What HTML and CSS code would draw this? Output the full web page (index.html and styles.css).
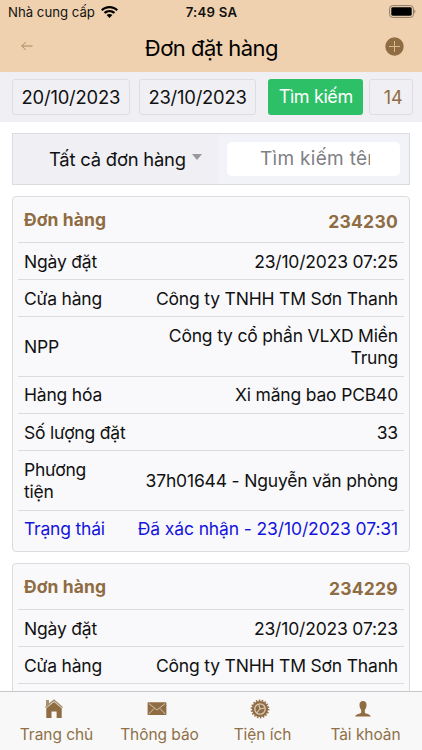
FILE: index.html
```html
<!doctype html>
<html lang="vi">
<head>
<meta charset="utf-8">
<meta name="viewport" content="width=device-width, initial-scale=1">
<title>Đơn đặt hàng</title>
<link rel="stylesheet" href="styles.css">
</head>
<body>
<div class="app">
	<header class="header">
		<div class="status">
			<div class="carrier">
				<span>Nhà cung cấp</span>
				<svg class="wifi" viewBox="0 0 17 12" width="17" height="12">
					<path d="M8.5 0C5.2 0 2.2 1.3 0 3.4L1.6 5C3.4 3.3 5.8 2.3 8.5 2.3S13.6 3.3 15.4 5L17 3.4C14.8 1.3 11.8 0 8.5 0Z"/>
					<path d="M8.5 4C6.3 4 4.3 4.8 2.8 6.2L4.4 7.8C5.5 6.8 6.9 6.2 8.5 6.2S11.5 6.8 12.6 7.8L14.2 6.2C12.7 4.8 10.7 4 8.5 4Z"/>
					<path d="M8.5 7.9C7.4 7.9 6.4 8.3 5.6 9L8.5 12L11.4 9C10.6 8.3 9.6 7.9 8.5 7.9Z"/>
				</svg>
			</div>
			<div class="clock">7:49 SA</div>
			<svg class="battery" viewBox="0 0 27 13" width="27" height="13">
				<rect x=".6" y=".6" width="23.8" height="11.8" rx="3" fill="none" stroke="#8b7a66" stroke-width="1"/>
				<rect x="2.3" y="2.3" width="20.4" height="8.4" rx="1.4"/>
				<path d="M25.4 4.5C26.8 5 26.8 8 25.4 8.5Z" fill="#8b7a66"/>
			</svg>
		</div>
		<div class="titlebar">
			<svg class="back" viewBox="0 0 12 10" width="12" height="10">
				<path d="M11.5 5H.8M4.8 1L.8 5L4.8 9" fill="none" stroke="#a08054" stroke-width=".9"/>
			</svg>
			<h1 class="title">Đơn đặt hàng</h1>
			<svg class="add" viewBox="0 0 19 19" width="19" height="19">
				<circle cx="9.5" cy="9.5" r="9.2" fill="#8f6c42"/>
				<path d="M9.5 4V15M4 9.5H15" stroke="#d9b88f" stroke-width="1"/>
			</svg>
		</div>
	</header>

	<div class="dates">
		<div class="box date">20/10/2023</div>
		<div class="box date">23/10/2023</div>
		<button type="button" class="search-btn">Tìm kiếm</button>
		<div class="box count">14</div>
	</div>

	<main class="content">
		<div class="filter">
			<div class="select">
				<span>Tất cả đơn hàng</span>
				<span class="caret"></span>
			</div>
			<div class="query"><div class="query-box"><div class="query-text">Tìm kiếm tên</div></div></div>
		</div>

		<section class="card">
			<div class="row head"><span class="label">Đơn hàng</span><span class="value">234230</span></div>
			<div class="row"><span class="label">Ngày đặt</span><span class="value">23/10/2023 07:25</span></div>
			<div class="row"><span class="label">Cửa hàng</span><span class="value">Công ty TNHH TM Sơn Thanh</span></div>
			<div class="row"><span class="label">NPP</span><span class="value">Công ty cổ phần VLXD Miền<br>Trung</span></div>
			<div class="row"><span class="label">Hàng hóa</span><span class="value">Xi măng bao PCB40</span></div>
			<div class="row"><span class="label">Số lượng đặt</span><span class="value">33</span></div>
			<div class="row"><span class="label">Phương<br>tiện</span><span class="value">37h01644 - Nguyễn văn phòng</span></div>
			<div class="row state"><span class="label">Trạng thái</span><span class="value">Đã xác nhận - 23/10/2023 07:31</span></div>
		</section>

		<section class="card">
			<div class="row head"><span class="label">Đơn hàng</span><span class="value">234229</span></div>
			<div class="row"><span class="label">Ngày đặt</span><span class="value">23/10/2023 07:23</span></div>
			<div class="row"><span class="label">Cửa hàng</span><span class="value">Công ty TNHH TM Sơn Thanh</span></div>
			<div class="row"></div>
		</section>
	</main>

	<nav class="tabs">
		<div class="tab">
			<svg viewBox="0 0 20 20" width="20" height="20">
				<path d="M2 1H5V4.2L10 .3L19 8L18.2 8.9L10 2.2L1.8 8.9L1 8L2 7.1Z" opacity=".75"/>
				<path d="M10 3L17.7 9.3V19H12.6V12.5H7.5V19H2.3V9.3Z"/>
			</svg>
			<span>Trang chủ</span>
		</div>
		<div class="tab">
			<svg viewBox="0 0 20 20" width="20" height="20">
				<rect x=".6" y="3.3" width="18.8" height="12.8" rx=".6"/>
				<path d="M1.8 4.5L10 11L18.2 4.5M1.8 15L7 9.5M18.2 15L13 9.5" fill="none" stroke="#e3d9cc" stroke-width=".8"/>
			</svg>
			<span>Thông báo</span>
		</div>
		<div class="tab">
			<svg viewBox="0 0 20 20" width="20" height="20">
				<circle cx="10" cy="10" r="8.6" fill="none" stroke="#8f6c42" stroke-width="1.6" stroke-dasharray="1.5 1.502"/>
				<circle cx="10" cy="10" r="8.1"/>
				<circle cx="10" cy="10" r="5.2" fill="none" stroke="#d8cbb9" stroke-width="1.3"/>
				<path d="M10 10L8.6 4.8M10 10L15.2 8.8M10 10L6.5 14" stroke="#d8cbb9" stroke-width="1.1"/>
			</svg>
			<span>Tiện ích</span>
		</div>
		<div class="tab">
			<svg viewBox="0 0 20 20" width="20" height="20">
				<path d="M10 2C7.5 2 6.3 3.7 6.5 6.3C6.6 8.6 7.3 9.9 8.2 11V13.5C7.5 15.2 2.6 14.6 2.3 17.5H17.7C17.4 14.6 12.5 15.2 11.8 13.5V11C12.7 9.9 13.4 8.6 13.5 6.3C13.7 3.7 12.5 2 10 2Z"/>
			</svg>
			<span>Tài khoản</span>
		</div>
	</nav>
</div>
</body>
</html>
```

FILE: styles.css
```css
*{
	margin: 0;
	padding: 0;
	box-sizing: border-box;
}
body{
	font-family: Inter, "Liberation Sans", sans-serif;
	font-size: 17.5px;
	line-height: 22.3px;
	letter-spacing: -0.2px;
	color: #111;
	background: #fff;
}
.app{
	display: flex;
	flex-direction: column;
	height: 750px;
	overflow: hidden;
}
.header{
	flex: none;
	height: 72px;
	background: #efd1af;
}
.status{
	display: grid;
	grid-template-columns: 1fr auto 1fr;
	align-items: center;
	height: 23px;
	padding: 0 6px 0 8px;
	font-size: 13.2px;
	letter-spacing: 0;
}
.carrier{
	display: flex;
	align-items: center;
	gap: 6px;
}
.clock{
	padding-top: 1px;
	margin-right: 1px;
	font-weight: 600;
	letter-spacing: 0.25px;
}
.battery{
	justify-self: end;
}
.titlebar{
	display: grid;
	grid-template-columns: 1fr auto 1fr;
	align-items: center;
	height: 48px;
	padding: 0 18px 0 21px;
}
.title{
	padding-top: 2px;
	margin-right: 2px;
	font-size: 22px;
	font-weight: 400;
	line-height: 30px;
	letter-spacing: -0.5px;
	color: #000;
}
.back{
	margin-bottom: 2px;
}
.add{
	justify-self: end;
	margin-bottom: 1px;
}
.dates{
	display: flex;
	flex: none;
	height: 50px;
	padding: 7px 9px 7px 12px;
	background: #efeff4;
}
.box{
	border: 1px solid #dedee2;
	border-radius: 3px;
	line-height: 35px;
	text-align: center;
}
.date{
	width: 118px;
	margin-right: 9px;
	font-size: 18.4px;
	letter-spacing: -0.2px;
}
.search-btn{
	width: 95px;
	margin: 0 6px 0 3px;
	padding-top: 1px;
	border: 0;
	border-radius: 3px;
	font: inherit;
	font-size: 18px;
	letter-spacing: -0.4px;
	color: #fff;
	background: #2dc066;
}
.count{
	width: 44px;
	padding-left: 4px;
	font-size: 18px;
	color: #8f6c42;
}
.content{
	flex: 1;
	min-height: 0;
	padding: 11px 12px 0;
	overflow: hidden;
}
.filter{
	display: flex;
	height: 52px;
	margin-bottom: 11px;
	border: 1px solid #dcdce0;
	background: #efeff4;
}
.select{
	display: flex;
	flex: none;
	align-items: center;
	width: 205px;
	padding-left: 36px;
	gap: 6px;
	font-size: 18.4px;
	letter-spacing: -0.2px;
}
.caret{
	border: 5.5px solid transparent;
	border-top: 6px solid #999;
	border-bottom: 0;
	margin-top: -4px;
}
.query{
	flex: 1;
	min-width: 0;
	padding: 8px 9px;
	background: #f2f3f8;
}
.query-box{
	height: 34px;
	padding: 0 30px 0 33px;
	border-radius: 5px;
	background: #fff;
}
.query-text{
	font-size: 19px;
	line-height: 34px;
	letter-spacing: 0.3px;
	white-space: nowrap;
	color: #808084;
	overflow: hidden;
}
.card{
	margin-bottom: 11.4px;
	padding: 0 5px 3px;
	border: 1px solid #dcdce0;
	border-radius: 4px;
	background: #f9f9fc;
}
.row{
	display: flex;
	align-items: center;
	justify-content: space-between;
	min-height: 37.2px;
	padding: 7.8px 6px 6.1px;
	border-bottom: 1px solid #dcdce0;
}
.row:last-child{
	padding-top: 7px;
	border-bottom: 0;
}
.value{
	letter-spacing: -0.18px;
	text-align: right;
}
.head{
	height: 45.8px;
	padding: 7px 6px;
	font-weight: 700;
	letter-spacing: 0.1px;
	color: #8f6c42;
}
.head .label{
	padding-top: 1px;
}
.head .value{
	padding-top: 6px;
	letter-spacing: 0.25px;
}
.state{
	color: #1414dc;
}
.state .value{
	letter-spacing: -0.12px;
}
.tabs{
	display: flex;
	flex: none;
	height: 59px;
	padding: 7px 5px 0;
	border-top: 1px solid #c8c8ca;
	background: #f8f8f8;
}
.tab{
	display: flex;
	flex: 1;
	flex-direction: column;
	align-items: center;
	gap: 5px;
	font-size: 15.5px;
	line-height: 21px;
	letter-spacing: -0.05px;
	color: #8f7047;
}
.tab svg{
	margin-right: 6px;
	fill: #8f6c42;
}
```
